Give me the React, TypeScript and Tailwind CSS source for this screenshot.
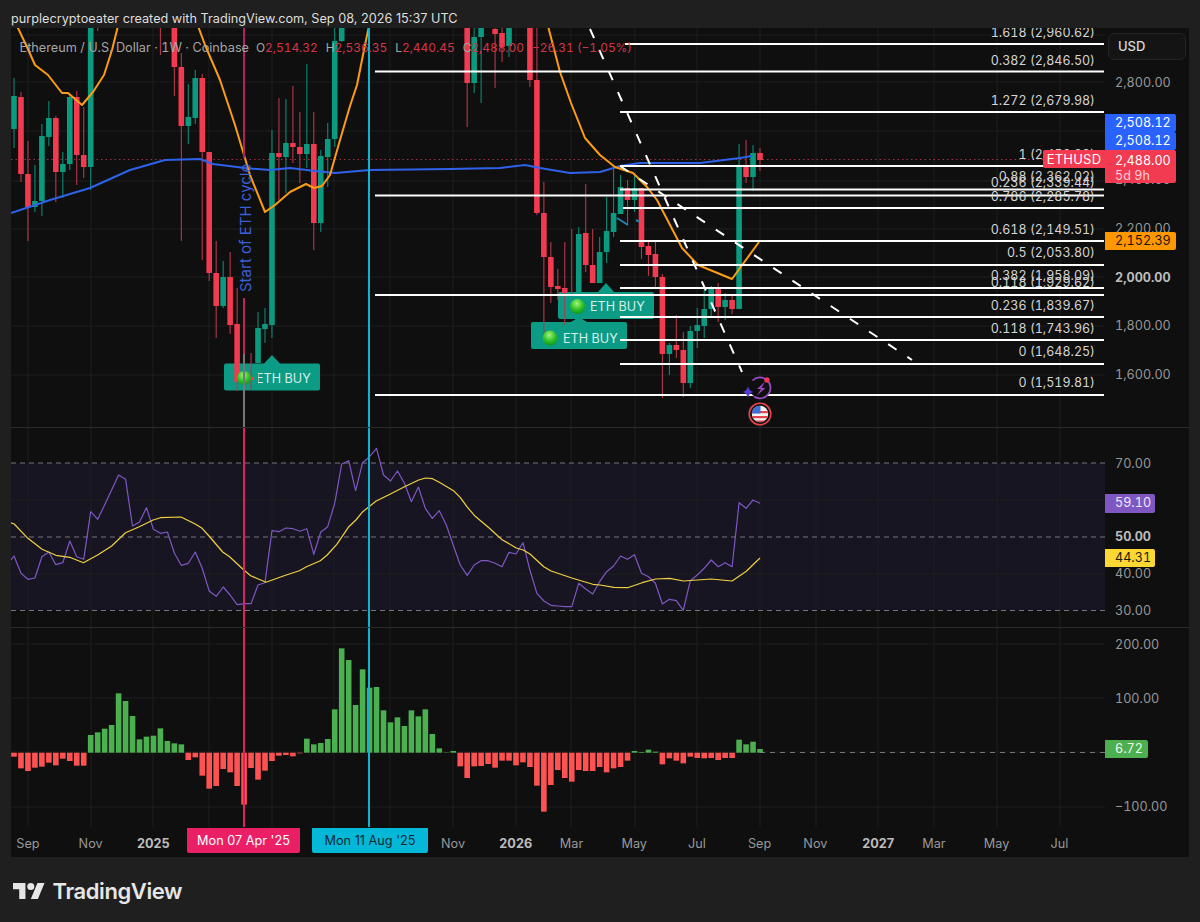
const RED = "#f23a50";
const GREEN = "#0b9a7f";

const xAt = (i: number) => 14 + 6.972 * i;

// [index, isUp, high, bodyTop, bodyBottom, low] in page pixels
const candles: [number, boolean, number, number, number, number][] = [
  [0, true, 78, 96, 129, 148],
  [1, false, 92, 97, 174, 182],
  [2, false, 141, 174, 207, 241],
  [3, true, 165, 201, 207, 212],
  [4, true, 124, 136, 201, 216],
  [5, true, 101, 118, 137, 146],
  [6, false, 116, 118, 172, 202],
  [7, true, 152, 164, 172, 198],
  [8, true, 93, 97, 164, 170],
  [9, false, 91, 97, 155, 185],
  [10, false, 107, 155, 167, 178],
  [11, true, 28, 20, 167, 190],
  [12, false, 28, 20, 20, 31],
  [21, false, 28, 20, 20, 55],
  [23, false, 28, 20, 67, 96],
  [24, false, 53, 67, 126, 241],
  [25, true, 84, 117, 126, 144],
  [26, true, 70, 78, 118, 124],
  [27, false, 74, 78, 152, 260],
  [28, false, 152, 152, 273, 281],
  [29, false, 241, 273, 306, 338],
  [30, true, 261, 277, 306, 308],
  [31, false, 252, 277, 325, 334],
  [32, false, 288, 324, 382, 391],
  [34, false, 353, 377, 380, 390],
  [35, true, 312, 328, 363, 363],
  [36, true, 308, 324, 329, 343],
  [37, true, 130, 153, 325, 338],
  [38, false, 98, 153, 157, 200],
  [39, true, 99, 143, 157, 193],
  [40, false, 86, 143, 147, 163],
  [41, false, 112, 147, 154, 183],
  [42, true, 64, 144, 154, 168],
  [43, false, 112, 144, 223, 250],
  [44, true, 150, 156, 223, 232],
  [45, true, 123, 139, 157, 187],
  [46, true, 28, 41, 139, 147],
  [47, true, 28, 20, 41, 42],
  [65, false, 28, 20, 83, 127],
  [66, true, 28, 37, 83, 93],
  [67, true, 28, 20, 37, 103],
  [69, false, 28, 29, 34, 88],
  [70, false, 28, 33, 47, 62],
  [71, true, 28, 20, 46, 57],
  [74, false, 28, 20, 80, 87],
  [75, false, 28, 80, 213, 215],
  [76, false, 182, 213, 257, 340],
  [77, false, 242, 257, 287, 303],
  [78, false, 269, 286, 289, 300],
  [79, false, 242, 288, 293, 325],
  [80, false, 229, 229, 229, 294],
  [81, true, 227, 234, 292, 292],
  [82, false, 184, 233, 265, 272],
  [83, false, 229, 265, 283, 283],
  [84, true, 237, 252, 283, 283],
  [85, true, 197, 231, 252, 263],
  [86, true, 167, 213, 232, 237],
  [87, true, 175, 187, 214, 214],
  [88, false, 180, 188, 200, 224],
  [89, true, 175, 188, 200, 212],
  [90, false, 188, 188, 247, 259],
  [91, false, 240, 246, 255, 276],
  [92, false, 242, 254, 277, 287],
  [93, false, 274, 277, 354, 398],
  [94, true, 343, 345, 354, 375],
  [95, false, 315, 345, 350, 358],
  [96, false, 332, 350, 383, 397],
  [97, true, 326, 331, 383, 388],
  [98, true, 308, 325, 331, 348],
  [99, true, 290, 309, 326, 338],
  [100, true, 286, 289, 309, 317],
  [101, false, 283, 289, 307, 322],
  [102, true, 293, 300, 307, 320],
  [103, false, 294, 300, 309, 314],
  [104, true, 144, 166, 309, 309],
  [105, false, 140, 166, 177, 183],
  [106, true, 145, 153, 177, 191],
  [107, false, 148, 153, 160, 171],
];

const orangeA = "17,26 27,47 35,65 48,75 62,93 68,93 82,105 93,92 104,75 112,50 118,26";
const orangeB =
  "198,26 205,45 220,80 235,125 250,175 265,212 275,205 290,192 306,184 314,188 322,186 330,175 340,140 350,106 357,85 365,45 369,26";
const orangeC =
  "548,26 560,72 571,103 585,138 600,155 615,167 633,173 647,187 657,200 682,248 698,265 732,279 759,242";
const blueLine =
  "11,213 50,200 90,188 130,170 165,160 200,159 213,164 245,168 270,170 290,168 315,171 335,173 370,170 450,169 500,168 525,165 540,168 570,173 600,172 620,166 640,163 700,163 740,158 752,156";

const fibLines: [number, number][] = [
  [44, 625], [71.5, 375], [112, 620], [166, 620], [189.5, 620], [195.5, 375], [208, 623], [241, 620],
  [265, 620], [288, 620], [295, 375], [317, 620], [340, 620], [364, 620], [395, 375],
];

const fibLabels: [string, number][] = [
  ["1.618 (2,960.62)", 32], ["0.382 (2,846.50)", 60], ["1.272 (2,679.98)", 100], ["1 (2,456.90)", 154],
  ["0.88 (2,362.02)", 176], ["0.236 (2,339.44)", 182], ["0.786 (2,285.78)", 196], ["0.618 (2,149.51)", 229],
  ["0.5 (2,053.80)", 252], ["0.382 (1,958.09)", 275], ["0.118 (1,929.62)", 282], ["0.236 (1,839.67)", 305],
  ["0.118 (1,743.96)", 328], ["0 (1,648.25)", 351], ["0 (1,519.81)", 382],
];

const gridX = [28, 91, 153, 209, 272, 334, 390, 453, 516, 571, 635, 697, 760, 816, 878, 934, 997, 1060];

const rsi = [
  378, 430, 448, 444, 380, 366, 404, 398, 333, 380, 388, 245, 268, 225, 180, 135, 148, 288, 276, 233, 298, 310, 306,
  370, 406, 400, 366, 415, 483, 499, 471, 495, 524, 521, 521, 465, 458, 302, 305, 294, 296, 304, 296, 373, 306, 290,
  220, 102, 92, 182, 98, 80, 55, 135, 153, 123, 160, 215, 171, 235, 265, 242, 285, 345, 405, 436, 405, 392, 392, 400,
  410, 367, 372, 338, 420, 490, 513, 526, 528, 530, 530, 460, 477, 492, 455, 425, 408, 378, 388, 374, 430, 440, 460,
  522, 508, 512, 541, 452, 435, 415, 390, 410, 398, 410, 218, 235, 210, 220,
];
const rsiPoints =
  `11,560 ` + rsi.map((v, i) => `${xAt(i).toFixed(1)},${(430 + v / 3).toFixed(1)}`).join(" ");

const rsiMa: [number, number][] = [
  [28, 278], [37, 282], [73, 325], [110, 358], [146, 376], [182, 382], [218, 398], [255, 375], [292, 348], [328, 308],
  [364, 290], [400, 270], [419, 263], [473, 261], [510, 282], [528, 295], [546, 318], [582, 366], [600, 380], [637, 420],
  [655, 437], [695, 457], [746, 436], [782, 422], [801, 410], [837, 392], [855, 375], [880, 343], [910, 292], [930, 270],
  [948, 245], [983, 213], [1020, 192], [1057, 170], [1094, 150], [1112, 144], [1130, 146], [1148, 157], [1185, 182],
  [1203, 203], [1220, 230], [1240, 257], [1276, 292], [1312, 329], [1349, 354], [1367, 360], [1385, 372], [1421, 410],
  [1440, 423], [1494, 444], [1549, 463], [1568, 465], [1604, 472], [1640, 473], [1678, 458], [1713, 447], [1750, 445],
  [1786, 453], [1858, 447], [1913, 453], [1950, 424], [1986, 384],
];
const rsiMaPoints = rsiMa.map(([x, y]) => `${(x / 2.613).toFixed(1)},${(430 + y / 3).toFixed(1)}`).join(" ");

const hist = [
  380, 415, 423, 413, 410, 398, 406, 386, 393, 407, 407, 315, 307, 296, 285, 190, 213, 258, 328, 320, 317, 295, 333,
  340, 343, 390, 382, 437, 476, 468, 417, 427, 468, 524, 414, 449, 422, 393, 377, 375, 379, 370, 326, 343, 339, 327,
  238, 55, 90, 225, 118, 173, 171, 241, 277, 262, 288, 241, 259, 238, 312, 355, 367, 363, 409, 444, 409, 408, 402, 413,
  392, 392, 406, 397, 411, 467, 545, 465, 420, 444, 455, 420, 423, 423, 411, 427, 415, 411, 392, 363, 366, 359, 365,
  403, 385, 392, 400, 380, 384, 385, 384, 390, 384, 384, 329, 343, 335, 357,
];

function Polyline({ points, color, width }: { points: string; color: string; width: number }) {
  return <polyline points={points} fill="none" stroke={color} strokeWidth={width} strokeLinejoin="round" />;
}

function Grid({ rows, top, bottom }: { rows: number[]; top: number; bottom: number }) {
  return (
    <g stroke="#1f1f1f" strokeWidth={1}>
      {gridX.map((x) => (
        <line key={x} x1={x} x2={x} y1={top} y2={bottom} />
      ))}
      {rows.map((y) => (
        <line key={y} x1={11} x2={1105} y1={y} y2={y} />
      ))}
    </g>
  );
}

function BuyLabel({ x, y, notch, notchTop }: { x: number; y: number; notch: number; notchTop: number }) {
  return (
    <path
      d={`M${x + 2} ${y}H${notch - 8}L${notch} ${notchTop}L${notch + 8} ${y}H${x + 94}q2 0 2 2V${y + 25}q0 2 -2 2H${x + 2}q-2 0 -2 -2V${y + 2}q0 -2 2 -2Z`}
      fill="#0c9b84"
    />
  );
}

function MainChart() {
  return (
    <svg viewBox="11 28 1094 399" className="block w-[1094px] h-[399px]">
      <defs>
        <radialGradient id="buyDot" cx="45%" cy="30%" r="75%">
          <stop offset="0%" stopColor="#a6f27a" />
          <stop offset="55%" stopColor="#2fc22a" />
          <stop offset="100%" stopColor="#0b8f18" />
        </radialGradient>
      </defs>
      <Grid rows={[35, 82, 131, 181, 229, 277, 326, 375]} top={28} bottom={427} />
      <BuyLabel x={224} y={363.5} notch={272} notchTop={355} />
      <BuyLabel x={558} y={292} notch={606} notchTop={283} />
      <BuyLabel x={531} y={322} notch={579} notchTop={317} />
      <line x1={11} x2={1043} y1={159.5} y2={159.5} stroke="#9c3040" strokeWidth={1} strokeDasharray="1.5 3" />

      {candles.map(([i, up, hi, top, bot, lo]) => {
        const x = xAt(i);
        const color = up ? GREEN : RED;
        return (
          <g key={i}>
            <line x1={x} x2={x} y1={hi} y2={lo} stroke={up ? "#0b8a72" : "#b5384a"} strokeWidth={1.1} />
            {bot > top && <rect x={x - 2.8} y={top} width={5.6} height={bot - top} fill={color} />}
          </g>
        );
      })}

      <circle cx={244} cy={378} r={7} fill="url(#buyDot)" />
      <circle cx={577.5} cy={306.5} r={7.5} fill="url(#buyDot)" />
      <circle cx={550} cy={338} r={7.5} fill="url(#buyDot)" />

      <Polyline points={blueLine} color="#2f62ea" width={2} />
      <Polyline points={orangeA} color="#fb9c14" width={2} />
      <Polyline points={orangeB} color="#fb9c14" width={2} />
      <Polyline points={orangeC} color="#fb9c14" width={2} />

      {fibLines.map(([y, x]) => (
        <line key={y} x1={x} x2={1104} y1={y} y2={y} stroke="#ffffff" strokeWidth={2} />
      ))}

      <line x1={590} y1={29} x2={742} y2={372} stroke="#fff" strokeWidth={2} strokeDasharray="10 13" />
      <line x1={620} y1={166} x2={912} y2={360} stroke="#fff" strokeWidth={2} strokeDasharray="10 13" />
      <line x1={617} y1={218} x2={628} y2={225} stroke="#1f86b0" strokeWidth={2} />
      <line x1={636} y1={220} x2={640} y2={222} stroke="#1f86b0" strokeWidth={2} />

      <line x1={244} x2={244} y1={28} y2={158} stroke="#b3215c" strokeWidth={2} />
      <line x1={244} x2={244} y1={298} y2={354} stroke="#c2215f" strokeWidth={2} />
      <line x1={244} x2={244} y1={354} y2={427} stroke="#77747c" strokeWidth={2} />
      <line x1={369} x2={369} y1={28} y2={427} stroke="#12b3cf" strokeWidth={2} />

      <g fill="#d4d4d4" fontSize={12.5} textAnchor="end" className="tabular-nums">
        {fibLabels.map(([text, y]) => (
          <text key={text + y} x={1095} y={y + 4.6}>
            {text}
          </text>
        ))}
      </g>

      <text transform="translate(250.5 292) rotate(-90)" fontSize={15} fill="#3a60d8">
        Start of ETH cycle
      </text>

      <g fill="#d5efe9" fontSize={12.6}>
        <text x={256} y={383}>ETH BUY</text>
        <text x={590} y={311}>ETH BUY</text>
        <text x={563} y={342.5}>ETH BUY</text>
      </g>
      <rect x={254.8} y={372} width={3.2} height={13} fill="#0c9b84" />

      {/* earnings + flag events */}
      <g>
        <circle cx={760} cy={387.5} r={10.5} fill="#0f0f0f" />
        <path d="M752.5 380.5a10.5 10.5 0 1 1 1.5 16" fill="none" stroke="#9b4dca" strokeWidth={1.7} />
        <path d="M765 381.5l-8 7.5h4l-4 6.5 8.5-7.5h-4z" fill="#9b45c8" />
        <path d="M748 386q1 5 5.500 6q-4.500 1 -5.500 6q-1 -5 -5.500 -6q4.500 -1 5.500 -6z" fill="#4f3cd2" />
        <circle cx={767} cy={380} r={2.7} fill="#f23a50" />
      </g>
      <g>
        <circle cx={760} cy={414} r={10.8} fill="#111" stroke="#e8434c" strokeWidth={1.6} />
        <clipPath id="flagClip">
          <circle cx={760} cy={414} r={8.2} />
        </clipPath>
        <g clipPath="url(#flagClip)">
          <rect x={751} y={405} width={18} height={18} fill="#f4f4f4" />
          <rect x={751} y={411} width={18} height={2.2} fill="#e8434c" />
          <rect x={751} y={416} width={18} height={2.2} fill="#e8434c" />
          <rect x={751} y={420.5} width={18} height={3} fill="#e8434c" />
          <rect x={751} y={405} width={9.5} height={8.5} fill="#3d6fd8" />
        </g>
      </g>
    </svg>
  );
}

function RsiChart() {
  return (
    <svg viewBox="11 428 1094 199" className="block w-[1094px] h-[199px]">
      <rect x={11} y={463} width={1094} height={147} fill="#181522" />
      <Grid rows={[500, 574]} top={428} bottom={627} />
      {[463, 537, 610.5].map((y) => (
        <line key={y} x1={11} x2={1105} y1={y} y2={y} stroke="#77757c" strokeWidth={1} strokeDasharray="5 4" />
      ))}
      <Polyline points={rsiPoints} color="#7e57c2" width={1.2} />
      <Polyline points={rsiMaPoints} color="#f0d040" width={1.2} />
      <line x1={244} x2={244} y1={428} y2={627} stroke="#e0215f" strokeWidth={2} />
      <line x1={369} x2={369} y1={428} y2={627} stroke="#12b3cf" strokeWidth={2} />
    </svg>
  );
}

function HistChart() {
  const base = 752.7;
  return (
    <svg viewBox="11 628 1094 199" className="block w-[1094px] h-[199px]">
      <Grid rows={[644, 698, 752, 807]} top={628} bottom={827} />
      <line x1={760} x2={1105} y1={752.5} y2={752.5} stroke="#77757c" strokeWidth={1} strokeDasharray="5 5" />
      {hist.map((v, i) => {
        const y = 630 + v / 3;
        const up = y < base;
        return (
          <rect
            key={i}
            x={xAt(i) - 2.8}
            y={up ? y : base}
            width={5.6}
            height={Math.abs(y - base)}
            fill={up ? "#4caf50" : "#ff5252"}
          />
        );
      })}
      <line x1={244} x2={244} y1={628} y2={827} stroke="#e0215f" strokeWidth={2} />
      <line x1={369} x2={369} y1={628} y2={827} stroke="#12b3cf" strokeWidth={2} />
    </svg>
  );
}

// one tick on a price scale; ticks are evenly spaced, so a blank one keeps the rhythm under a tag
function Tick({ text, bold }: { text?: string; bold?: boolean }) {
  return (
    <span
      className={`h-[13px] text-[12.6px] leading-[13px] tabular-nums whitespace-nowrap ${
        bold ? "font-bold text-[#bdbdbd]" : "text-[#989898]"
      }`}
    >
      {text}
    </span>
  );
}

function PriceTag({ text, className }: { text: string; className: string }) {
  return (
    <div
      className={`absolute left-0 flex items-center pl-[10px] text-[12.6px] leading-none tabular-nums rounded-r-[2px] ${className}`}
    >
      {text}
    </div>
  );
}

// weekly columns under the bars, so a month label sits on the bar it names
const timeLabels: [string, string, boolean][] = [
  ["Sep", "col-start-3", false],
  ["Nov", "col-start-12", false],
  ["2025", "col-start-21", true],
  ["Nov", "col-start-64", false],
  ["2026", "col-start-73", true],
  ["Mar", "col-start-81", false],
  ["May", "col-start-90", false],
  ["Jul", "col-start-99", false],
  ["Sep", "col-start-108", false],
  ["Nov", "col-start-116", false],
  ["2027", "col-start-125", true],
  ["Mar", "col-start-133", false],
  ["May", "col-start-142", false],
  ["Jul", "col-start-151", false],
];

export default function App() {
  return (
    <div className="w-[1200px] h-[922px] bg-[#1f1f1f] flex flex-col font-[Inter,sans-serif] overflow-hidden">
      <div className="h-[28px] pl-[11px] flex items-center pt-[10px] text-[12.7px] leading-[18px] text-[#dedede]">
        purplecryptoeater created with TradingView.com, Sep 08, 2026 15:37 UTC
      </div>

      <div className="ml-[11px] w-[1178px] bg-[#0f0f0f] flex flex-col">
        {/* price pane */}
        <div className="flex h-[400px] border-b border-[#2a2a2a]">
          <div className="relative w-[1094px]">
            <MainChart />
            <div className="absolute left-[8.5px] top-[12px] flex items-baseline gap-[8px] text-[11.9px] leading-4 tabular-nums whitespace-nowrap text-[#a5a5a5]">
              <span className="text-[12.7px] mr-[-1px]">Ethereum / U.S. Dollar · 1W · Coinbase</span>
              <span>O<span className="text-[#d5354a]">2,514.32</span></span>
              <span>H<span className="text-[#d5354a]">2,536.35</span></span>
              <span>L<span className="text-[#d5354a]">2,440.45</span></span>
              <span>C<span className="text-[#d5354a]">2,488.00</span></span>
              <span className="text-[#d5354a]">−26.31 (−1.05%)</span>
            </div>
            <div className="absolute left-[1032px] top-[122px] w-[62px] h-[18px] flex items-center justify-center rounded-l-[2px] bg-[#f23a50] text-white text-[13px] leading-none tracking-[0.2px]">
              ETHUSD
            </div>
          </div>
          <div className="relative w-[84px] flex flex-col">
            <div className="ml-[3px] mt-[5px] w-[78px] h-[27px] flex items-center pl-[9px] rounded-md border border-[#252525] bg-[#141414] text-[13px] font-medium text-[#d8d8d8]">
              USD
            </div>
            <div className="mt-[16px] pl-[10px] flex flex-col gap-[35.67px]">
              <Tick text="2,800.00" />
              <Tick />
              <Tick text="2,400.00" />
              <Tick text="2,200.00" />
              <Tick text="2,000.00" bold />
              <Tick text="1,800.00" />
              <Tick text="1,600.00" />
            </div>
            <PriceTag text="2,508.12" className="top-[86px] w-[71px] h-[18px] bg-[#2962ff] text-white" />
            <PriceTag text="2,508.12" className="top-[104px] w-[71px] h-[18px] bg-[#2962ff] text-white" />
            <div className="absolute left-0 top-[122px] w-[71px] h-[33px] pl-[10px] pt-[3px] flex flex-col rounded-r-[2px] bg-[#f23a50] text-[12.6px] leading-[15px] tabular-nums">
              <span className="text-white">2,488.00</span>
              <span className="text-[#fbd0d6]">5d 9h</span>
            </div>
            <PriceTag text="2,152.39" className="top-[204px] w-[71px] h-[18px] bg-[#ff9800] text-[#1f1400]" />
          </div>
        </div>

        {/* RSI pane */}
        <div className="flex h-[200px] border-b border-[#2a2a2a]">
          <div className="w-[1094px]">
            <RsiChart />
          </div>
          <div className="relative w-[84px] pl-[10px] pt-[28.5px] flex flex-col gap-[23.75px]">
            <Tick text="70.00" />
            <Tick />
            <Tick text="50.00" bold />
            <Tick text="40.00" />
            <Tick text="30.00" />
            <PriceTag text="59.10" className="top-[66px] w-[50px] h-[19px] bg-[#7e57c2] text-[#f0eaf8]" />
            <PriceTag text="44.31" className="top-[121px] w-[50px] h-[18px] bg-[#fdd835] text-[#1f1a00]" />
          </div>
        </div>

        {/* histogram pane */}
        <div className="flex h-[199px]">
          <div className="w-[1094px]">
            <HistChart />
          </div>
          <div className="relative w-[84px] pl-[10px] pt-[9.5px] flex flex-col gap-[41.2px]">
            <Tick text="200.00" />
            <Tick text="100.00" />
            <Tick />
            <Tick text="−100.00" />
            <PriceTag text="6.72" className="top-[112px] w-[43px] h-[18px] bg-[#4caf50] text-[#eef8ee]" />
          </div>
        </div>

        {/* time axis */}
        <div className="relative h-[30px] pt-[10px] text-[12.7px] leading-[14px] text-[#989898]">
          <div className="grid grid-cols-[repeat(157,6.972px)] -ml-[0.5px]">
            {timeLabels.map(([text, col, bold]) => (
              <span key={col} className={`${col} row-start-1 flex justify-center whitespace-nowrap ${bold ? "font-bold text-[#bdbdbd]" : ""}`}>
                {text}
              </span>
            ))}
          </div>
          <div className="absolute left-[176px] top-[1px] w-[113px] h-[25px] flex items-center justify-center rounded-b-[2px] bg-[#eb1f66] text-white">
            Mon 07 Apr '25
          </div>
          <div className="absolute left-[301px] top-[1px] w-[116px] h-[25px] flex items-center justify-center rounded-b-[2px] bg-[#05b8d8] text-[#0a2a33]">
            Mon 11 Aug '25
          </div>
        </div>
      </div>

      <div className="flex items-center gap-[8px] pl-[12.5px] pt-[21px]">
        <svg viewBox="0 4 36 18" className="w-[32px] h-[16px] fill-[#e6e6e6]">
          <path d="M14 22H7V11H0V4h14v18zM28 22h-8l7.5-18h8L28 22z" />
          <circle cx="20" cy="8" r="4" />
        </svg>
        <span className="text-[22px] leading-[26px] font-semibold tracking-[-0.4px] text-[#e6e6e6]">TradingView</span>
      </div>
    </div>
  );
}
